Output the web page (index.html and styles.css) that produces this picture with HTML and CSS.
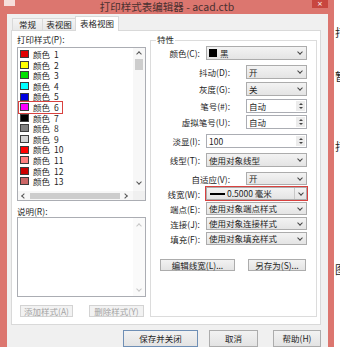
FILE: index.html
```html
<!DOCTYPE html>
<html lang="zh-CN">
<head>
    <meta charset="UTF-8">
    <meta name="viewport" content="width=device-width, initial-scale=1.0">
    <title>打印样式表编辑器 - acad.ctb</title>
    <link rel="stylesheet" href="styles.css">
</head>
<body>
<div class="screen">
    <div class="window">
        <div class="titlebar">
            <span class="appicon"></span>
            <span class="title">打印样式表编辑器 - acad.ctb</span>
            <span class="close">×</span>
        </div>
        <div class="frame">
            <div class="client">
                <div class="tabs">
                    <div class="tab t1">常规</div>
                    <div class="tab t2">表视图</div>
                    <div class="tab active">表格视图</div>
                </div>
                <div class="panel">
                    <!-- 左侧：打印样式列表 -->
                    <div class="leftcol">
                        <div class="fieldlabel">打印样式(P):</div>
                        <div class="listbox">
                            <div class="items">
                                <div class="item"><span class="entry"><span class="swatch" style="background:#e00000"></span>颜色<span class="num">1</span></span></div>
                                <div class="item"><span class="entry"><span class="swatch" style="background:#ffff00"></span>颜色<span class="num">2</span></span></div>
                                <div class="item"><span class="entry"><span class="swatch" style="background:#00e000"></span>颜色<span class="num">3</span></span></div>
                                <div class="item"><span class="entry"><span class="swatch" style="background:#00ffff"></span>颜色<span class="num">4</span></span></div>
                                <div class="item"><span class="entry"><span class="swatch" style="background:#0000e0"></span>颜色<span class="num">5</span></span></div>
                                <div class="item"><span class="entry marked"><span class="swatch" style="background:#ff00ff"></span>颜色<span class="num">6</span></span></div>
                                <div class="item"><span class="entry"><span class="swatch" style="background:#000000"></span>颜色<span class="num">7</span></span></div>
                                <div class="item"><span class="entry"><span class="swatch" style="background:#808080"></span>颜色<span class="num">8</span></span></div>
                                <div class="item"><span class="entry"><span class="swatch" style="background:#d4d4d4"></span>颜色<span class="num">9</span></span></div>
                                <div class="item"><span class="entry"><span class="swatch" style="background:#ff0000"></span>颜色<span class="num">10</span></span></div>
                                <div class="item"><span class="entry"><span class="swatch" style="background:#ff7f7f"></span>颜色<span class="num">11</span></span></div>
                                <div class="item"><span class="entry"><span class="swatch" style="background:#cc0000"></span>颜色<span class="num">12</span></span></div>
                                <div class="item"><span class="entry"><span class="swatch" style="background:#cc6666"></span>颜色<span class="num">13</span></span></div>
                            </div>
                            <div class="vscroll">
                                <span class="arrow up"></span>
                                <span class="vthumb"></span>
                                <span class="spacer"></span>
                                <span class="arrow down"></span>
                            </div>
                            <div class="hscroll">
                                <span class="arrow left"></span>
                                <span class="hthumb"></span>
                                <span class="spacer"></span>
                                <span class="arrow right"></span>
                            </div>
                            <div class="corner"></div>
                        </div>
                        <div class="fieldlabel desc-label">说明(R):</div>
                        <div class="descbox">
                            <div class="desc-text"></div>
                            <div class="desc-scroll">
                                <span class="arrow up off"></span>
                                <span class="arrow down off"></span>
                            </div>
                        </div>
                        <div class="leftbtns">
                            <div class="btn disabled add">添加样式(A)</div>
                            <div class="btn disabled del">删除样式(Y)</div>
                        </div>
                    </div>

                    <!-- 右侧：特性 -->
                    <div class="group">
                        <div class="group-title">特性</div>
                        <div class="row first">
                            <span class="lab">颜色(C):</span>
                            <div class="ctl combo"><span class="chip"></span><span class="val">黑</span><span class="drop"></span></div>
                        </div>
                        <div class="row mid mt5">
                            <span class="lab">抖动(D):</span>
                            <div class="ctl combo"><span class="val">开</span><span class="drop"></span></div>
                        </div>
                        <div class="row mid mt3">
                            <span class="lab">灰度(G):</span>
                            <div class="ctl combo"><span class="val">关</span><span class="drop"></span></div>
                        </div>
                        <div class="row mid mt3">
                            <span class="lab">笔号(#):</span>
                            <div class="ctl spin"><span class="val">自动</span><span class="spinbtn"><i class="tri-up"></i><i class="tri-down"></i></span></div>
                        </div>
                        <div class="row mid mt2">
                            <span class="lab">虚拟笔号(U):</span>
                            <div class="ctl spin"><span class="val">自动</span><span class="spinbtn"><i class="tri-up"></i><i class="tri-down"></i></span></div>
                        </div>
                        <div class="row mt5">
                            <span class="lab">淡显(I):</span>
                            <div class="ctl spin"><span class="val">100</span><span class="spinbtn"><i class="tri-up"></i><i class="tri-down"></i></span></div>
                        </div>
                        <div class="row mt5">
                            <span class="lab">线型(T):</span>
                            <div class="ctl combo"><span class="val">使用对象线型</span><span class="drop"></span></div>
                        </div>
                        <div class="row mid short mt5">
                            <span class="lab">自适应(V):</span>
                            <div class="ctl combo"><span class="val">开</span><span class="drop"></span></div>
                        </div>
                        <div class="row short mt2">
                            <span class="lab">线宽(W):</span>
                            <div class="ctl combo focus"><span class="lw-line"></span><span class="val">0.5000 毫米</span><span class="drop"></span></div>
                        </div>
                        <div class="row short mt2">
                            <span class="lab">端点(E):</span>
                            <div class="ctl combo"><span class="val">使用对象端点样式</span><span class="drop"></span></div>
                        </div>
                        <div class="row short mt2">
                            <span class="lab">连接(J):</span>
                            <div class="ctl combo"><span class="val">使用对象连接样式</span><span class="drop"></span></div>
                        </div>
                        <div class="row short mt2">
                            <span class="lab">填充(F):</span>
                            <div class="ctl combo"><span class="val">使用对象填充样式</span><span class="drop"></span></div>
                        </div>
                        <div class="groupbtns">
                            <div class="btn edit">编辑线宽(L)...</div>
                            <div class="btn saveas">另存为(S)...</div>
                        </div>
                    </div>
                </div>
                <div class="footer">
                    <div class="btn default save">保存并关闭</div>
                    <div class="btn cancel">取消</div>
                    <div class="btn help">帮助(H)</div>
                </div>
            </div>
        </div>
    </div>
    <div class="behind">
        <span class="bg-char c1">打</span>
        <span class="bg-char c2">暂</span>
        <span class="bg-char c3">打</span>
        <span class="bg-char c4">图</span>
    </div>
</div>
</body>
</html>
```

FILE: styles.css
```css
* {
    box-sizing: border-box;
}
body {
    margin: 0;
    font-family: "Noto Sans CJK SC", "Noto Sans", sans-serif;
    font-size: 8.5px;
    color: #1e1e1e;
    background: #fff;
}
.screen {
    display: flex;
    width: 340px;
    height: 347px;
    overflow: hidden;
}

/* 窗口外框 */
.window {
    flex: none;
    width: 334px;
    display: flex;
    flex-direction: column;
    background: #dc766f;
}
.titlebar {
    height: 17px;
    display: grid;
    grid-template-columns: 22px 1fr 22px;
    align-items: start;
}
.appicon {
    width: 11px;
    height: 6px;
    margin-left: 4px;
    background: #f6dedb;
}
.title {
    text-align: center;
    font-size: 10.5px;
    line-height: 14px;
    color: #4a3030;
}
.close {
    width: 16px;
    height: 8px;
    background: #c8463f;
    color: #fff;
    font-family: "DejaVu Sans", sans-serif;
    font-size: 7px;
    line-height: 8px;
    text-align: center;
}
.frame {
    flex: 1;
    display: flex;
    padding: 0 6px 0 7px;
}
.client {
    flex: 1;
    display: flex;
    flex-direction: column;
    background: #f0f0f0;
    padding: 2px 7px 0 4px;
}

/* 选项卡 */
.tabs {
    display: flex;
    align-items: flex-end;
    height: 14px;
    padding-left: 1px;
}
.tab {
    height: 12px;
    line-height: 11px;
    text-align: center;
    border: 1px solid #d9d9d9;
    border-bottom: 0;
    background: linear-gradient(#f4f4f4, #e8e8e8);
}
.tab.t1 {
    width: 31px;
}
.tab.t2 {
    width: 34px;
    margin-left: -1px;
}
.tab.active {
    width: 44px;
    height: 15px;
    line-height: 13px;
    margin-left: -1px;
    margin-bottom: -1px;
    background: #fff;
    position: relative;
    z-index: 1;
}
.panel {
    height: 295px;
    display: flex;
    gap: 4px;
    padding: 3px 3px 0 5px;
    border: 1px solid #d9d9d9;
    background: #fff;
}

/* 左列 */
.leftcol {
    width: 129px;
    display: flex;
    flex-direction: column;
}
.fieldlabel {
    height: 11px;
    line-height: 11px;
}
.listbox {
    margin-top: 2px;
    height: 154px;
    border: 1px solid #abadb3;
    display: grid;
    grid-template-columns: 1fr 12px;
    grid-template-rows: 1fr 9px;
}
.items {
    padding-top: 1px;
}
.item {
    height: 10.6px;
    display: flex;
    align-items: center;
    padding-left: 2px;
}
.entry {
    display: inline-flex;
    align-items: center;
    height: 10.6px;
    line-height: 10.6px;
    white-space: nowrap;
}
.entry.marked {
    margin-left: -1.5px;
    padding: 0 3px 0 1.5px;
    outline: 1.5px solid #d9413f;
}
.swatch {
    width: 9px;
    height: 8px;
    margin-right: 4px;
    border: 1px solid #3c3c3c;
}
.num {
    margin-left: 4px;
}
.vscroll {
    display: flex;
    flex-direction: column;
    align-items: center;
    padding-bottom: 3px;
    background: #f7f7f7;
}
.hscroll {
    display: flex;
    align-items: center;
    padding-right: 2px;
    background: #f7f7f7;
}
.corner {
    background: #f0f0f0;
}
.spacer {
    flex: 1;
}
.vthumb {
    width: 8px;
    height: 11px;
    margin-top: 1px;
    background: #cdcdcd;
}
.hthumb {
    width: 90px;
    height: 6px;
    margin-left: 2px;
    background: #cdcdcd;
}
.arrow {
    flex: none;
    width: 12px;
    height: 10px;
    display: flex;
    align-items: center;
    justify-content: center;
}
.hscroll .arrow {
    width: 10px;
    height: 9px;
}
.arrow::before {
    content: "";
    width: 3px;
    height: 3px;
    border-left: 1.2px solid #555;
    border-top: 1.2px solid #555;
}
.arrow.up::before {
    transform: translateY(1px) rotate(45deg);
}
.arrow.down::before {
    transform: translateY(-1px) rotate(225deg);
}
.arrow.left::before {
    transform: translateX(1px) rotate(-45deg);
}
.arrow.right::before {
    transform: translateX(-1px) rotate(135deg);
}
.arrow.off::before {
    border-color: #c6c6c6;
}
.desc-label {
    margin-top: 5px;
}
.descbox {
    height: 80px;
    border: 1px solid #abadb3;
    display: grid;
    grid-template-columns: 1fr 12px;
}
.desc-scroll {
    display: flex;
    flex-direction: column;
    justify-content: space-between;
    padding: 2px 0 1px;
    background: #fafafa;
}
.leftbtns {
    display: flex;
    margin-top: 8px;
}
.btn {
    height: 12px;
    line-height: 10px;
    display: flex;
    align-items: center;
    justify-content: center;
    white-space: nowrap;
    border: 1px solid #acacac;
    background: linear-gradient(#f2f2f2, #e3e3e3);
}
.btn.disabled {
    color: #a3a3a3;
    border-color: #d3d3d3;
    background: #f2f2f2;
}
.btn.add {
    width: 53px;
    margin-left: 3px;
}
.btn.del {
    width: 55px;
    margin-left: 16px;
}

/* 特性分组 */
.group {
    width: 167px;
    height: 277px;
    margin-top: 5.5px;
    border: 1px solid #dcdcdc;
}
.group-title {
    width: fit-content;
    height: 11px;
    line-height: 11px;
    margin: -6.5px 0 0 5px;
    padding: 0 1px;
    background: #fff;
}
.row {
    display: flex;
    align-items: center;
    height: 14px;
}
.row.short {
    height: 13px;
}
.row.first {
    margin-top: 1px;
}
.mt2 {
    margin-top: 2px;
}
.mt3 {
    margin-top: 3px;
}
.mt5 {
    margin-top: 5px;
}
.lab {
    width: 49px;
    line-height: 12px;
    text-align: right;
    white-space: nowrap;
}
.row.mid .lab {
    width: 79px;
}
.ctl {
    width: 101px;
    height: 100%;
    margin-left: 6px;
    display: flex;
    align-items: center;
    padding-left: 2px;
}
.row.mid .ctl {
    width: 61px;
    margin-left: 16px;
}
.val {
    flex: 1;
    min-width: 0;
    white-space: nowrap;
    line-height: 11px;
}
.combo {
    border: 1px solid #acacac;
    background: linear-gradient(#f3f3f3, #e4e4e4);
}
.combo.focus {
    outline: 1.5px solid #d9413f;
    outline-offset: 0.5px;
}
.combo.focus .drop {
    border-left: 1px solid #c8c8c8;
}
.drop {
    flex: none;
    width: 12px;
    height: 100%;
    display: flex;
    align-items: center;
    justify-content: center;
}
.drop::before {
    content: "";
    width: 3px;
    height: 3px;
    border-left: 1.2px solid #444;
    border-top: 1.2px solid #444;
    transform: translateY(-1px) rotate(225deg);
}
.chip {
    width: 8px;
    height: 8px;
    margin-right: 3px;
    background: #000;
}
.lw-line {
    width: 15px;
    height: 2px;
    margin: 0 2px 0 1px;
    background: #000;
}
.spin {
    border: 1px solid #abadb3;
    background: #fff;
}
.spinbtn {
    flex: none;
    width: 9px;
    height: calc(100% - 2px);
    margin-right: 1px;
    display: flex;
    flex-direction: column;
    align-items: center;
    justify-content: center;
    gap: 1.5px;
    background: #ececec;
}
.tri-up,
.tri-down {
    width: 0;
    height: 0;
    border-left: 2px solid transparent;
    border-right: 2px solid transparent;
}
.tri-up {
    border-bottom: 2.5px solid #444;
}
.tri-down {
    border-top: 2.5px solid #444;
}
.groupbtns {
    display: flex;
    margin-top: 14px;
}
.btn.edit {
    width: 75px;
    margin-left: 9px;
}
.btn.saveas {
    width: 58px;
    margin-left: 13px;
}

/* 底部按钮 */
.footer {
    display: flex;
    justify-content: flex-end;
    margin-top: 5px;
}
.footer .btn {
    height: 17px;
    align-items: flex-start;
    padding-top: 2px;
}
.btn.default {
    border-color: #6f8fb5;
}
.btn.save {
    width: 75px;
    margin-right: 11px;
}
.btn.cancel {
    width: 49px;
    margin-right: 15px;
}
.btn.help {
    width: 48px;
}

/* 后面窗口露出的部分 */
.behind {
    flex: 1;
    display: flex;
    flex-direction: column;
    padding-left: 1px;
    overflow: hidden;
    background: #fff;
    font-size: 11px;
    color: #222;
}
.bg-char {
    line-height: 11px;
    white-space: nowrap;
}
.c1 {
    margin-top: 27px;
}
.c2 {
    margin-top: 33px;
}
.c3 {
    margin-top: 59px;
}
.c4 {
    margin-top: 112px;
}
```
